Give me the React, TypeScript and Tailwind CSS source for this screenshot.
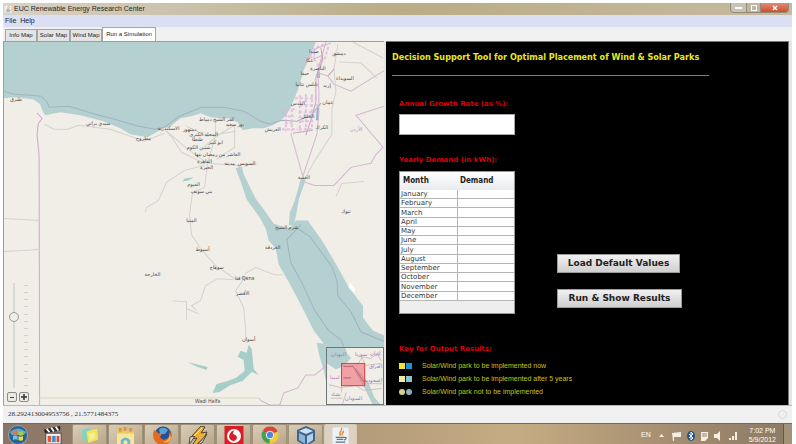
import { useState } from "react";
import { clsx } from "clsx";

const TABS = [
    { name: "Info Map", width: "w-[32px]" },
    { name: "Solar Map", width: "w-[33px]" },
    { name: "Wind Map", width: "w-[32px]" },
    { name: "Run a Simulation", width: "w-[54px]" },
];

const MONTHS = [
    "January", "February", "March", "April", "May", "June",
    "July", "August", "September", "October", "November", "December",
];

const CITIES = [
    { name: "طبرق", x: 16, y: 101 },
    { name: "سيدي براني", x: 98, y: 125 },
    { name: "مطروح", x: 143, y: 140 },
    { name: "الاسكندرية", x: 168, y: 130 },
    { name: "دمنهور", x: 189, y: 131 },
    { name: "كفر الشيخ دمياط", x: 216, y: 121 },
    { name: "بور سعيد", x: 234, y: 126 },
    { name: "المحلة الكبرى", x: 203, y: 136 },
    { name: "طنطا", x: 197, y: 141 },
    { name: "ابو كبير", x: 215, y: 144 },
    { name: "شبين الكوم", x: 198, y: 149 },
    { name: "العاشر من رمضان بنها", x: 217, y: 156 },
    { name: "القاهرة", x: 204, y: 163 },
    { name: "الجيزة", x: 206, y: 169 },
    { name: "السويس", x: 246, y: 165 },
    { name: "مدينة", x: 229, y: 165 },
    { name: "الفيوم", x: 193, y: 186 },
    { name: "بني سويف", x: 201, y: 193 },
    { name: "المنيا", x: 191, y: 222 },
    { name: "أسيوط", x: 202, y: 250 },
    { name: "سوهاج", x: 216, y: 268 },
    { name: "قنا Qena", x: 244, y: 279 },
    { name: "الأقصر", x: 242, y: 294 },
    { name: "أسوان", x: 248, y: 340 },
    { name: "Wadi Halfa", x: 207, y: 402 },
    { name: "الخارجة", x: 152, y: 275 },
    { name: "شرم الشيخ", x: 286, y: 228 },
    { name: "الغردقة", x: 272, y: 248 },
    { name: "تبوك", x: 345, y: 213 },
    { name: "العقبة", x: 303, y: 179 },
    { name: "العريش", x: 272, y: 131 },
    { name: "الخليل", x: 307, y: 118 },
    { name: "القدس", x: 297, y: 105 },
    { name: "نتانيا", x: 299, y: 86 },
    { name: "نابلس", x: 311, y: 86 },
    { name: "حيفا", x: 304, y: 75 },
    { name: "عكا", x: 309, y: 62 },
    { name: "صيدا", x: 313, y: 53 },
    { name: "الناصرة", x: 317, y: 70 },
    { name: "دمشق", x: 338, y: 55 },
    { name: "السويداء", x: 344, y: 80 },
    { name: "إربد", x: 326, y: 87 },
    { name: "عمان", x: 327, y: 104 },
    { name: "الكرك", x: 321, y: 129 },
];

const KEYS = [
    { text: "Solar/Wind park to be implemented now", solar: "bg-[#f4e33a]", wind: "bg-[#1c93d2]", shape: "" },
    { text: "Solar/Wind park to be implemented after 5 years", solar: "bg-[#eeee9c]", wind: "bg-[#8ec3cf]", shape: "" },
    { text: "Solar/Wind park not to be implemented", solar: "bg-[#d9d08c]", wind: "bg-[#8fb1c4]", shape: "rounded-full" },
];

function CupIcon({ className }: { className?: string }) {
    return (
        <svg viewBox="0 0 20 20" className={className}>
            <rect x="1" y="1" width="18" height="19" rx="2" fill="#eef1f3" stroke="#cfd4d8" />
            <path d="M11 2c2 3-4 4-1 8M13 5c1 2-3 3-1 5" fill="none" stroke="#e88531" strokeWidth="1.5" />
            <path d="M5 12h9M6 14h7M5 17h10M14 12q4 0 0 3" fill="none" stroke="#58798f" strokeWidth="1.3" />
        </svg>
    );
}

function TitleBar() {
    return (
        <header className="flex h-[12px] items-center bg-linear-to-r from-[#d8d2c8] via-[#b9ad86] to-[#c5baa0]">
            <CupIcon className="mr-[2px] ml-px size-[8px]" />
            <h1 className="flex-1 text-[7px] leading-[12px] text-[#2b2722]">EUC Renewable Energy Research Center</h1>
            <div className="mr-[3px] flex h-[10px] self-start overflow-hidden rounded-b-sm border border-t-0 border-[#958a78]">
                <button aria-label="Minimize" className="flex w-[16px] items-center justify-center border-r border-[#958a78] bg-[#c9c1b1]">
                    <span className="h-[2px] w-[7px] bg-white" />
                </button>
                <button aria-label="Maximize" className="flex w-[14px] items-center justify-center border-r border-[#958a78] bg-[#bdb4a3]">
                    <span className="size-[6px] border border-white" />
                </button>
                <button aria-label="Close" className="flex w-[27px] items-center justify-center bg-linear-to-b from-[#dc8b76] to-[#d24a2b]">
                    <svg viewBox="0 0 6 6" className="size-[6px]">
                        <path d="M1 1l4 4M5 1L1 5" stroke="#fff" strokeWidth="1.3" />
                    </svg>
                </button>
            </div>
        </header>
    );
}

function MapDrawing() {
    return (
        <svg viewBox="4 42 380 362" preserveAspectRatio="xMinYMin slice" className="absolute inset-0 size-full">
            <rect x="0" y="40" width="800" height="800" fill="#f1eee8" />
            <g fill="#b5d0d0">
                <path d="M4 42V98L13 97 33 99 40 104 42 110 45 115 60 112 80 115 103 121 120 128 130 134 147 137 163 128 170 126 180 118 191 116 200 113 210 117 220 118 228 118 237 122 242 130 252 128 263 128 272 125 280 120 286 114 290 107 297 90 303 70 309 57 315 42Z" />
                <path d="M235 168l6 -2 2 8 7 14 5 10 8 11 10 14 10 4 7 0 5 -7 12 0 16 23 14 24 11 20 14 18 0 12 10 13 12 5V404H330L323 370 318 353 316 342 323 343 313 330 301 306 290 285 278 264 275 248 268 240 265 228 259 217 246 199 240 181Z" />
                <path d="M300 178l5 1 -7 20 -2 12 -3 14 -5 0 1 -13 5 -12Z" />
                <path d="M248 344l3 4 2 20 5 6 -7 -3 -9 9 -12 4 -11 7 -7 1 4 -9 11 -3 8 -3 9 -7 -1 -11 -6 -3 3 -6 6 2Z" fill="#a5cec8" />
                <path d="M184 178l9 -1 -5 3 -6 1ZM187 361l12 3 8 2 -1 3 -9 -3Z" fill="#a5cec8" />
                <path d="M316 107l2 0 0 13 -3 0ZM316 72l3 0 0 6 -3 0Z" fill="#8cb8c8" />
            </g>
            <path d="M349 281l3 5 3 3 -3 2 -4 -4Z" fill="#fff" />
            {/* country borders */}
            <g fill="none" stroke="#d2b6d0" strokeWidth="1">
                <path d="M37 113L42 118 38 124 37 135 39 155 39.5 404" stroke="#cda6cb" />
                <path d="M39 397H258" stroke="#d8d3c2" />
                <path d="M258 397l3 3 8 4h10l4 -12 14 -5 8 -13 9 0 11 -9 6 -6" />
                <path d="M290 133l5 18 7 25 14 -42 2 -22 0 -20 -1 -22 8 -28 2 -7" />
                <path d="M302 181l12 4 19 0 17 -18 20 -4 5 -9 7 -7 -27 -32 28 -9" />
                <path d="M384 70L350 91 333 84 327 76 318 73 322 55 313 59 314 49 330 43" />
            </g>
            {/* sea limits */}
            <g fill="none" stroke="#a3b2bf" strokeWidth="1">
                <path d="M4 91l10 3 17 1 10 1 6 6 2 5 20 -1 26 8 23 6 20 6 17 3 9 -2 15 -11 22 -9 22 0 20 4 17 10 9 3 12 -4 15 1 14 -6 10 -12" />
                <path d="M300 224l-14 15 4 23 11 20 13 28 14 20 12 9 4 9M294 226l15 10 22 30 5 14 1 15 13 16 10 20 24 10" />
            </g>
            {/* roads */}
            <g fill="none" stroke="#d5d1ce" strokeWidth="1">
                <path d="M44 124l10 5 14 0 10 -4 32 4 34 12 20 -8" />
                <path d="M165 130l20 17 22 16 8 -28 0 -15M165 130l7 8 9 14 23 11M204 146l15 -12 15 -9v22l-18 12M186 126l20 10 29 -5M193 153l14 10 29 2 20 -1" />
                <path d="M207 163l-3 24 -12 5 -3 22 2 20 9 14 15 17 19 13 10 -1 -9 13 8 17 2 22 0 12M244 273l11 -6 19 7 8 0" />
                <path d="M204 165l-20 5 -18 12 -8 18 -12 7 -1 5M4 218l36 2M4 251l36 -2M196 310l-5 -5 9 -5 5 -15 12 -7 16 1M172 300l14 1 0 18M186 308l12 5" />
                <path d="M337 44l-4 25 2 22 -4 18 0 25 -18 28 -10 18M338 62l22 1 16 15M352 42l15 8 15 8M335 196l6 -13 22 -2" />
                <path d="M320 48l2 12 -7 17 0 25 -5 18 -5 15M292 133l20 -3M327 76l6 -7" stroke="#c6aab7" />
            </g>
            {/* governorate hatching */}
            <g fill="none" stroke="#dfb3e2" strokeWidth="2" strokeDasharray="3 2" opacity="0.75">
                <path d="M281 109h14M282 116h11M284 123h10M281 129h16M294 98h22M299 105h18M298 112h17M300 121h12M298 129h15" />
                <path d="M285 109v22M291 109v22M299 95v36M305 94v36M311 94v36M302 68l12 -20 10 -4M316 66l8 -8 4 -13M309 56l8 7" />
            </g>
            <g fontSize="5" textAnchor="middle" fill="#4a4a4a" className="font-['Noto_Sans','DejaVu_Sans',sans-serif]">
                {CITIES.map((city) => (
                    <text key={city.name} x={city.x} y={city.y}>{city.name}</text>
                ))}
                <text x="355" y="131" fill="#ab93c7">الأردن</text>
            </g>
        </svg>
    );
}

function MiniMap() {
    return (
        <svg viewBox="0 0 58 58" className="absolute right-0 bottom-0 size-[58px] border border-[#6f7478]">
            <rect width="58" height="58" fill="#f1eee8" />
            <path d="M0 0H19L23 12 15 20 9 22 0 16ZM30 20L43 36 49 51 55 58H47L39 42 29 25ZM18 3l7 7 -5 6Z" fill="#b5d0d0" />
            <path d="M2 38l12 3 16 -2 8 5 18 -2M15 24v22M31 18l6 -9 8 2 9 -7M37 37h20M4 52h12M36 9l4 9 16 -2M20 46l-4 12M52 6l4 7" fill="none" stroke="#c8c1bc" />
            <g fontSize="5" fill="#9d68c4" textAnchor="middle">
                <text x="12" y="8">اليونان</text>
                <text x="35" y="8">سوريا</text>
                <text x="50" y="7">إيران</text>
                <text x="50" y="21">العراق</text>
                <text x="8" y="32">ليبيا</text>
                <text x="48" y="35">السعودية</text>
                <text x="9" y="50">تشاد</text>
                <text x="27" y="54">السودان</text>
            </g>
            <rect x="15" y="16" width="24" height="23" fill="#f26d78" fillOpacity="0.6" stroke="#e03a3e" />
            <path d="M17 19h10l11 16M17 31h8" fill="none" stroke="#b6606d" />
        </svg>
    );
}

function MapPane() {
    const [zoom, setZoom] = useState(14);

    return (
        <section aria-label="Map" className="relative overflow-hidden border-t border-l border-[#9aa0a0]">
            <MapDrawing />
            <div className="absolute bottom-[3px] left-[3px] flex flex-col gap-1">
                <div className="flex h-[105px] gap-[3px]">
                    <input
                        type="range"
                        aria-label="Zoom"
                        min={0}
                        max={20}
                        value={zoom}
                        onChange={(e) => setZoom(Number(e.target.value))}
                        className="h-full w-[14px] appearance-none bg-transparent [direction:rtl] [writing-mode:vertical-lr] [&::-webkit-slider-runnable-track]:w-[2px] [&::-webkit-slider-runnable-track]:bg-[#dad8d4] [&::-webkit-slider-thumb]:-ml-[4px] [&::-webkit-slider-thumb]:size-[10px] [&::-webkit-slider-thumb]:appearance-none [&::-webkit-slider-thumb]:rounded-full [&::-webkit-slider-thumb]:border [&::-webkit-slider-thumb]:border-[#999997] [&::-webkit-slider-thumb]:bg-[#efeeeb]"
                    />
                    <div className="flex flex-col justify-between py-[2px]">
                        {Array.from({ length: 15 }, (_, i) => (
                            <span key={i} className="h-px w-[4px] bg-[#d2d0cb]" />
                        ))}
                    </div>
                </div>
                <div className="flex gap-[2px]">
                    <button aria-label="Zoom out" onClick={() => setZoom(zoom - 1)} className="flex h-[10px] w-[10px] items-center justify-center rounded-xs border border-[#8c8c8a] bg-[#ebe9e6]">
                        <span className="h-px w-[4px] bg-[#444]" />
                    </button>
                    <button aria-label="Zoom in" onClick={() => setZoom(zoom + 1)} className="flex h-[10px] w-[10px] items-center justify-center rounded-xs border border-[#8c8c8a] bg-[#ebe9e6]">
                        <svg viewBox="0 0 6 6" className="size-[6px]"><path d="M0 3h6M3 0v6" stroke="#333" strokeWidth="1.5" /></svg>
                    </button>
                </div>
            </div>
            <MiniMap />
        </section>
    );
}

function SimulationPane() {
    return (
        <section className="border-t border-r border-[#777] bg-black pt-[7px] pr-2 pl-[6px] font-['DejaVu_Sans',sans-serif]">
            <h2 className="w-[317px] border-b border-[#8c8c10] pb-[10px] font-['DejaVu_Sans_Condensed','DejaVu_Sans',sans-serif] text-[9px] leading-[16px] font-bold whitespace-nowrap text-[#e8e81c]">
                Decision Support Tool for Optimal Placement of Wind &amp; Solar Parks
            </h2>
            <div className="flex gap-[42px] pt-[22px] pl-[7px]">
                <div className="w-[116px]">
                    <label htmlFor="growth" className="block text-[7px] leading-[12px] font-bold whitespace-nowrap text-[#d8000c]">
                        Annual Growth Rate (as %):
                    </label>
                    <input id="growth" type="text" className="mt-1 block h-[21px] w-full border border-[#aaa] bg-white px-1 text-[9px]" />
                    <h3 id="demand" className="mt-[19px] text-[7px] leading-[12px] font-bold whitespace-nowrap text-[#d8000c]">
                        Yearly Demand (in kWh):
                    </h3>
                    <div className="mt-[5px] border border-[#999] bg-[#eee] pb-[12px]">
                        <table aria-labelledby="demand" className="h-[129px] w-full table-fixed border-collapse bg-white text-left">
                            <thead className="bg-linear-to-b from-white to-[#e9ecef]">
                                <tr className="h-[18px] font-['DejaVu_Sans_Condensed','DejaVu_Sans',sans-serif] text-[8px] leading-[18px] text-[#222]">
                                    <th className="px-[3px] py-0">Month</th>
                                    <th className="px-[3px] py-0">Demand</th>
                                </tr>
                            </thead>
                            <tbody>
                                {MONTHS.map((month) => (
                                    <tr key={month} className="border-b border-[#b5b5b5] text-[7px] leading-[8px] text-[#333]">
                                        <td className="border-r border-[#b5b5b5] p-0 pl-px">{month}</td>
                                        <td className="p-0" />
                                    </tr>
                                ))}
                            </tbody>
                        </table>
                    </div>
                </div>
                <div className="flex flex-col items-start gap-4 pt-[156px]">
                    <button className="h-[19px] w-[123px] border border-[#9b9b9b] bg-linear-to-b from-[#f1f1f1] to-[#cfcfcf] text-[9px] font-bold whitespace-nowrap text-[#222]">
                        Load Default Values
                    </button>
                    <button className="h-[19px] w-[125px] border border-[#9b9b9b] bg-linear-to-b from-[#f1f1f1] to-[#cfcfcf] text-[9px] font-bold whitespace-nowrap text-[#222]">
                        Run &amp; Show Results
                    </button>
                </div>
            </div>
            <h3 className="pt-[29px] pl-[7px] text-[7px] leading-[12px] font-bold text-[#d8000c]">Key for Output Results:</h3>
            <ul className="flex flex-col gap-px pt-[5px] pl-[7px] font-['Liberation_Sans',sans-serif]">
                {KEYS.map((key) => (
                    <li key={key.text} className="flex h-[12px] items-center text-[7px] text-[#c4c418]">
                        <span className={clsx("size-[6px]", key.solar, key.shape)} />
                        <span className={clsx("mr-[10px] ml-px size-[6px]", key.wind, key.shape)} />
                        {key.text}
                    </li>
                ))}
            </ul>
        </section>
    );
}

function StartIcon() {
    return (
        <svg viewBox="0 0 20 20" className="size-[20px]">
            <circle cx="10" cy="10" r="9.5" fill="#286490" stroke="#8fa9b4" />
            <path d="M2 7q8 -7 16 0l-2 3H4Z" fill="#6ba5c8" />
            <path d="M5 6q2 -1.5 4.500 0v4q-2 -1.500 -4.500 0Z" fill="#ee7135" />
            <path d="M10.500 6q2 1.500 4.500 0v4q-2 1.500 -4.500 0Z" fill="#9ed24b" />
            <path d="M5 11q2 -1.500 4.500 0v4q-2 -1.500 -4.500 0Z" fill="#6fc1ee" />
            <path d="M10.500 11q2 1.500 4.500 0v4q-2 1.500 -4.500 0Z" fill="#f9d54a" />
        </svg>
    );
}

function ClapperIcon() {
    return (
        <svg viewBox="0 0 20 20" className="size-[18px]">
            <path d="M0 4L18 0v5L1 8Z" fill="#262626" />
            <path d="M3 3l3 4M8 2l3 4M13 1l3 4" stroke="#fff" strokeWidth="2" />
            <rect x="2" y="8" width="17" height="12" fill="#f3f3f3" stroke="#444" />
            <rect x="4" y="11" width="4" height="7" fill="#e3572f" />
            <rect x="9" y="11" width="4" height="7" fill="#3d8ecb" />
            <rect x="14" y="11" width="3" height="7" fill="#d64848" />
        </svg>
    );
}

function NotesIcon() {
    return (
        <svg viewBox="0 0 20 20" className="size-[18px]">
            <path d="M1 4l9 -2 2 13 -10 2Z" fill="#83d3c1" />
            <path d="M6 6l12 -3 1 12 -11 4Z" fill="#f4e35d" />
            <path d="M8 9l7 -2 1 6 -6 3Z" fill="#f9ee94" />
        </svg>
    );
}

function ExplorerIcon() {
    return (
        <svg viewBox="0 0 20 20" className="size-[19px]">
            <path d="M2 3h6l2 2h9v14H1Z" fill="#ecca62" />
            <path d="M3 2h3v4H3ZM8 1h3v4H8ZM14 2h3v4h-3Z" fill="#e0933c" />
            <path d="M1 8h18v11H1Z" fill="#f8e69d" />
            <path d="M5 20v-5q5 -6 10 0v5h-3v-4q-2 -2 -4 0v4Z" fill="#6fb5da" />
        </svg>
    );
}

function FirefoxIcon() {
    return (
        <svg viewBox="0 0 20 20" className="size-[20px]">
            <circle cx="11" cy="9" r="8.500" fill="#274f92" />
            <path d="M7 3q5 -3 9 1l-3 4H8Z" fill="#5ba2d2" />
            <path d="M2 4q3 1 4 3l4 1 -2 3q3 5 8 1 3 -3 1 -8 4 5 1 11 -5 7 -12 3Q-1 13 2 4Z" fill="#e56b22" />
            <path d="M17 6q2 8 -6 10 6 2 8 -4Z" fill="#f7b83b" />
        </svg>
    );
}

function WinampIcon() {
    return (
        <svg viewBox="0 0 20 20" className="size-[20px]">
            <path d="M13 0l4 1 -4 6 6 -1 -3 6 -9 8 -2 -2 4 -6 -6 1 1 -3Z" fill="#efae35" stroke="#4b4335" />
            <path d="M2 11l5 -1 -6 9ZM19 8l-5 9 -5 2Z" fill="#d9d5cc" stroke="#51493c" />
            <path d="M14 2L6 10" stroke="#fff1b0" />
        </svg>
    );
}

function VodafoneIcon() {
    return (
        <svg viewBox="0 0 20 20" className="size-[20px]">
            <rect x="0.500" y="0" width="19" height="20" fill="#d91e28" />
            <circle cx="10" cy="10" r="7" fill="#fff" />
            <path d="M13 4q-4 0 -4 4 4 1 4 4 -1 3 -4 3 -4 -1 -4 -5 1 -6 8 -6Z" fill="#d91e28" />
        </svg>
    );
}

function ChromeIcon() {
    return (
        <svg viewBox="0 0 20 20" className="size-[18px]">
            <path d="M10 10L1.800 5.500A9.300 9.300 0 0 1 18.500 6Z" fill="#dc4437" />
            <path d="M10 10l8.500 -4A9.300 9.300 0 0 1 9.500 19.300Z" fill="#f5cc36" />
            <path d="M10 10l-0.500 9.300A9.300 9.300 0 0 1 1.800 5.500Z" fill="#43a052" />
            <circle cx="10" cy="10" r="4.200" fill="#4a86d4" stroke="#fff" />
        </svg>
    );
}

function NetBeansIcon() {
    return (
        <svg viewBox="0 0 20 20" className="size-[20px]">
            <path d="M10 0l9 4v11l-9 5 -9 -5V4Z" fill="#3f648f" />
            <path d="M10 2l7 3 -7 3 -7 -3Z" fill="#cfe1ef" />
            <path d="M3 7l6 3v8l-6 -4Z" fill="#8db5d6" />
            <path d="M17 7l-6 3v8l6 -4Z" fill="#b3d1e6" />
        </svg>
    );
}

const TASKS = [
    { name: "Sticky Notes", Icon: NotesIcon },
    { name: "Explorer", Icon: ExplorerIcon },
    { name: "Firefox", Icon: FirefoxIcon },
    { name: "Winamp", Icon: WinampIcon },
    { name: "Vodafone", Icon: VodafoneIcon },
    { name: "Chrome", Icon: ChromeIcon },
    { name: "NetBeans", Icon: NetBeansIcon },
];

function Taskbar() {
    return (
        <footer className="flex h-[21px] items-start overflow-hidden border-t border-[#75695c] bg-linear-to-r from-[#8b7566] via-[#c6ac83] via-65% to-[#8c7964]">
            <button aria-label="Start" className="flex w-[30px] justify-center pt-px"><StartIcon /></button>
            <button aria-label="Movie Maker" className="mx-px flex w-[37px] justify-center pt-[2px]"><ClapperIcon /></button>
            {TASKS.map(({ name, Icon }) => (
                <button key={name} aria-label={name} className="mr-px flex h-[22px] w-[35px] shrink-0 justify-center rounded-t-xs border border-[#a09179] bg-linear-to-br from-[#d9cdb8] to-[#b9a688] pt-px">
                    <Icon />
                </button>
            ))}
            <button aria-label="Java" className="flex h-[22px] w-[33px] shrink-0 justify-center rounded-t-xs border border-[#d5cbb9] bg-[#ddd2bf] pt-px">
                <CupIcon className="size-[19px]" />
            </button>
            <div className="ml-auto flex items-center pt-[2px] text-[7px] text-white">
                <span className="mr-2 leading-[16px]">EN</span>
                <svg viewBox="0 0 84 16" className="mr-[6px] h-[16px] w-[84px]" fill="#f3efe8">
                    <path d="M0 10l2.500 -3 2.500 3Z" />
                    <path d="M13 6l9 -1v5l-7 0v4h-1Z" />
                    <ellipse cx="32" cy="9" rx="4" ry="5" fill="#24548b" />
                    <path d="M30 7l4 4 -2 2V5l2 2 -4 4" fill="none" stroke="#fff" />
                    <path d="M42 5h7v6l-3 3h-4ZM55 7h3l3 -3v10l-3 -3h-3Z" />
                    <path d="M43 7h5M43 9h5" stroke="#94826c" />
                    <path d="M70 11h2v2h-2ZM73 9h2v4h-2ZM76 5h2v8h-2Z" />
                </svg>
                <time className="text-center leading-[9px]">
                    <span className="block">7:02 PM</span>
                    <span className="block">5/9/2012</span>
                </time>
            </div>
            <button aria-label="Show desktop" className="ml-[7px] h-[21px] w-[9px] border-l border-[#655747] bg-[#a39179]" />
        </footer>
    );
}

export default function App() {
    const [tab, setTab] = useState("Run a Simulation");

    return (
        <div className="flex min-h-screen flex-col bg-white pt-[3px] pr-1 pl-[3px] font-['Liberation_Sans',sans-serif]">
            <TitleBar />
            <nav className="flex h-[12px] items-center gap-1 bg-[#dcdff2] pl-[2px] text-[7px] text-[#222]">
                <button>File</button>
                <button>Help</button>
            </nav>
            <div className="flex h-[14px] items-end bg-[#f0f0f0] pl-[2px]">
                {TABS.map(({ name, width }) => (
                    <button
                        key={name}
                        onClick={() => setTab(name)}
                        className={clsx(
                            "border border-b-0 border-[#a5a5a5] text-[6px] whitespace-nowrap text-[#222]",
                            width,
                            tab === name ? "h-[14px] bg-white" : "h-[12px] bg-[#e4e4e4]",
                        )}
                    >
                        {name}
                    </button>
                ))}
            </div>
            <main className="grid flex-1 grid-cols-[381fr_403fr] gap-[2px] bg-[#e6e6e6] pr-[3px]">
                <MapPane />
                <SimulationPane />
            </main>
            <div className="flex h-[18px] items-center justify-between border-t border-[#bbb] bg-[#f0f0f0] pr-[5px] pl-[5px]">
                <p className="font-['Liberation_Serif',serif] text-[7px] text-[#333]">28.292413004953756 , 21.5771484375</p>
                <span className="size-[9px] rounded-full border border-[#d8d8d8]" />
            </div>
            <Taskbar />
        </div>
    );
}
